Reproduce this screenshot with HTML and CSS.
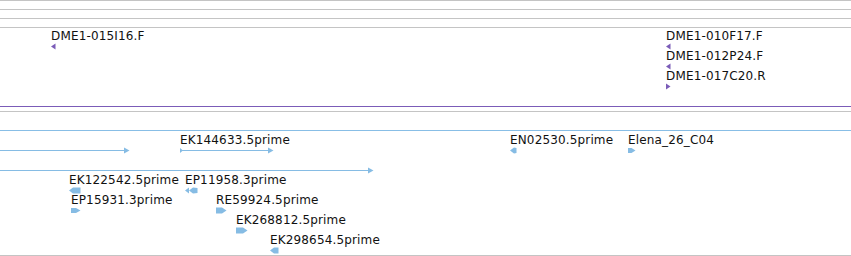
FILE: index.html
```html
<!DOCTYPE html>
<html lang="en">
<head>
    <meta charset="UTF-8">
    <title>Track View</title>
    <link rel="stylesheet" href="styles.css">
</head>
<body>

    <!-- Ruler lines -->
    <div class="ruler-line"></div>
    <div class="ruler-line"></div>
    <div class="ruler-line"></div>

    <!-- BAC end track (purple) -->
    <div class="track track-bac">
        <div class="feature" style="left: 51px; top: 1px;">
            <span class="label">DME1-015I16.F</span>
            <svg class="glyph" width="5" height="7"><polygon points="4.5,0.5 0,3.5 4.5,6.5"/></svg>
        </div>
        <div class="feature" style="left: 666px; top: 1px;">
            <span class="label">DME1-010F17.F</span>
            <svg class="glyph" width="5" height="7"><polygon points="4.5,0.5 0,3.5 4.5,6.5"/></svg>
        </div>
        <div class="feature" style="left: 666px; top: 21px;">
            <span class="label">DME1-012P24.F</span>
            <svg class="glyph" width="5" height="7"><polygon points="4.5,0.5 0,3.5 4.5,6.5"/></svg>
        </div>
        <div class="feature" style="left: 666px; top: 41px;">
            <span class="label">DME1-017C20.R</span>
            <svg class="glyph" width="5" height="7"><polygon points="0,0.5 4.5,3.5 0,6.5"/></svg>
        </div>
    </div>

    <div class="spacer"></div>
    <div class="track track-empty"></div>

    <!-- EST track (blue) -->
    <div class="track track-est">
        <!-- row 0 -->
        <div class="feature" style="left: 0; top: 2px;">
            <span class="label"></span>
            <svg class="glyph" width="130" height="7"><rect x="0" y="3" width="125" height="1"/><polygon points="124,0.5 129.5,3.5 124,6.5"/></svg>
        </div>
        <div class="feature" style="left: 180px; top: 2px;">
            <span class="label">EK144633.5prime</span>
            <svg class="glyph" width="94" height="7"><polygon points="0,1 3,3.5 0,6"/><rect x="0" y="3" width="89" height="1"/><polygon points="88,0.5 93.5,3.5 88,6.5"/></svg>
        </div>
        <div class="feature" style="left: 510px; top: 2px;">
            <span class="label">EN02530.5prime</span>
            <svg class="glyph" width="7" height="7"><polygon points="0,3.5 4,0.5 6.5,1 6.5,6 4,6.5"/></svg>
        </div>
        <div class="feature" style="left: 628px; top: 2px;">
            <span class="label">Elena_26_C04</span>
            <svg class="glyph" width="8" height="7"><polygon points="0,1 3.5,1 7.5,3.5 3.5,6 0,6"/></svg>
        </div>

        <!-- row 1 -->
        <div class="feature" style="left: 0; top: 22px;">
            <span class="label"></span>
            <svg class="glyph" width="374" height="7"><rect x="0" y="3" width="369" height="1"/><polygon points="368,0.5 373.5,3.5 368,6.5"/></svg>
        </div>

        <!-- row 2 -->
        <div class="feature" style="left: 69px; top: 42px;">
            <span class="label">EK122542.5prime</span>
            <svg class="glyph" width="12" height="7"><polygon points="0,3.5 4,0.5 11.5,0.5 11.5,6.5 4,6.5"/></svg>
        </div>
        <div class="feature" style="left: 185px; top: 42px;">
            <span class="label">EP11958.3prime</span>
            <svg class="glyph" width="13" height="7"><polygon points="0,3.5 4,0.5 4,6.5"/><polygon points="4,3.5 8,0.5 12.5,1 12.5,6 8,6.5"/></svg>
        </div>

        <!-- row 3 -->
        <div class="feature" style="left: 71px; top: 62px;">
            <span class="label">EP15931.3prime</span>
            <svg class="glyph" width="10" height="7"><polygon points="0,1 5,1 9.5,3.5 5,6 0,6"/></svg>
        </div>
        <div class="feature" style="left: 216px; top: 62px;">
            <span class="label">RE59924.5prime</span>
            <svg class="glyph" width="11" height="7"><polygon points="0,0.5 6,0.5 10.5,3.5 6,6.5 0,6.5"/></svg>
        </div>

        <!-- row 4 -->
        <div class="feature" style="left: 236px; top: 82px;">
            <span class="label">EK268812.5prime</span>
            <svg class="glyph" width="12" height="7"><polygon points="0,0.5 7,0.5 11.5,3.5 7,6.5 0,6.5"/></svg>
        </div>

        <!-- row 5 -->
        <div class="feature" style="left: 270px; top: 102px;">
            <span class="label">EK298654.5prime</span>
            <svg class="glyph" width="9" height="7"><polygon points="0,3.5 4,0.5 8.5,0.5 8.5,6.5 4,6.5"/></svg>
        </div>
    </div>

</body>
</html>
```

FILE: styles.css
```css
/* Page */
body {
    margin: 0;
    background-color: white;
    color: #111;
    font-family: "DejaVu Sans", sans-serif;
    font-size: 12px;
    overflow: hidden;
}

/* Ruler lines at the top */
.ruler-line {
    height: 8px;
    border-top: 1px solid #c4c4c4;
}

/* Tracks */
.track {
    position: relative;
    border-top: 1px solid #c4c4c4;
}

.track-bac {
    height: 78px;
    border-bottom: 1px solid #7b5cb8; /* Purple bottom line */
}

.spacer {
    height: 4px;
}

.track-empty {
    height: 18px;
}

.track-est {
    height: 124px;
    border-top: 1px solid #88bee6; /* Blue top line */
    border-bottom: 1px solid #c4c4c4;
}

/* Features: label above, glyph below */
.feature {
    position: absolute;
    display: flex;
    flex-direction: column;
    align-items: flex-start;
}

.label {
    display: block;
    height: 14px;
    line-height: 14px;
    white-space: nowrap;
    letter-spacing: 0.15px;
}

.glyph {
    display: block;
}

.track-bac .glyph {
    fill: #7b5cb8;
}

.track-est .glyph {
    fill: #86bce4;
}
```
